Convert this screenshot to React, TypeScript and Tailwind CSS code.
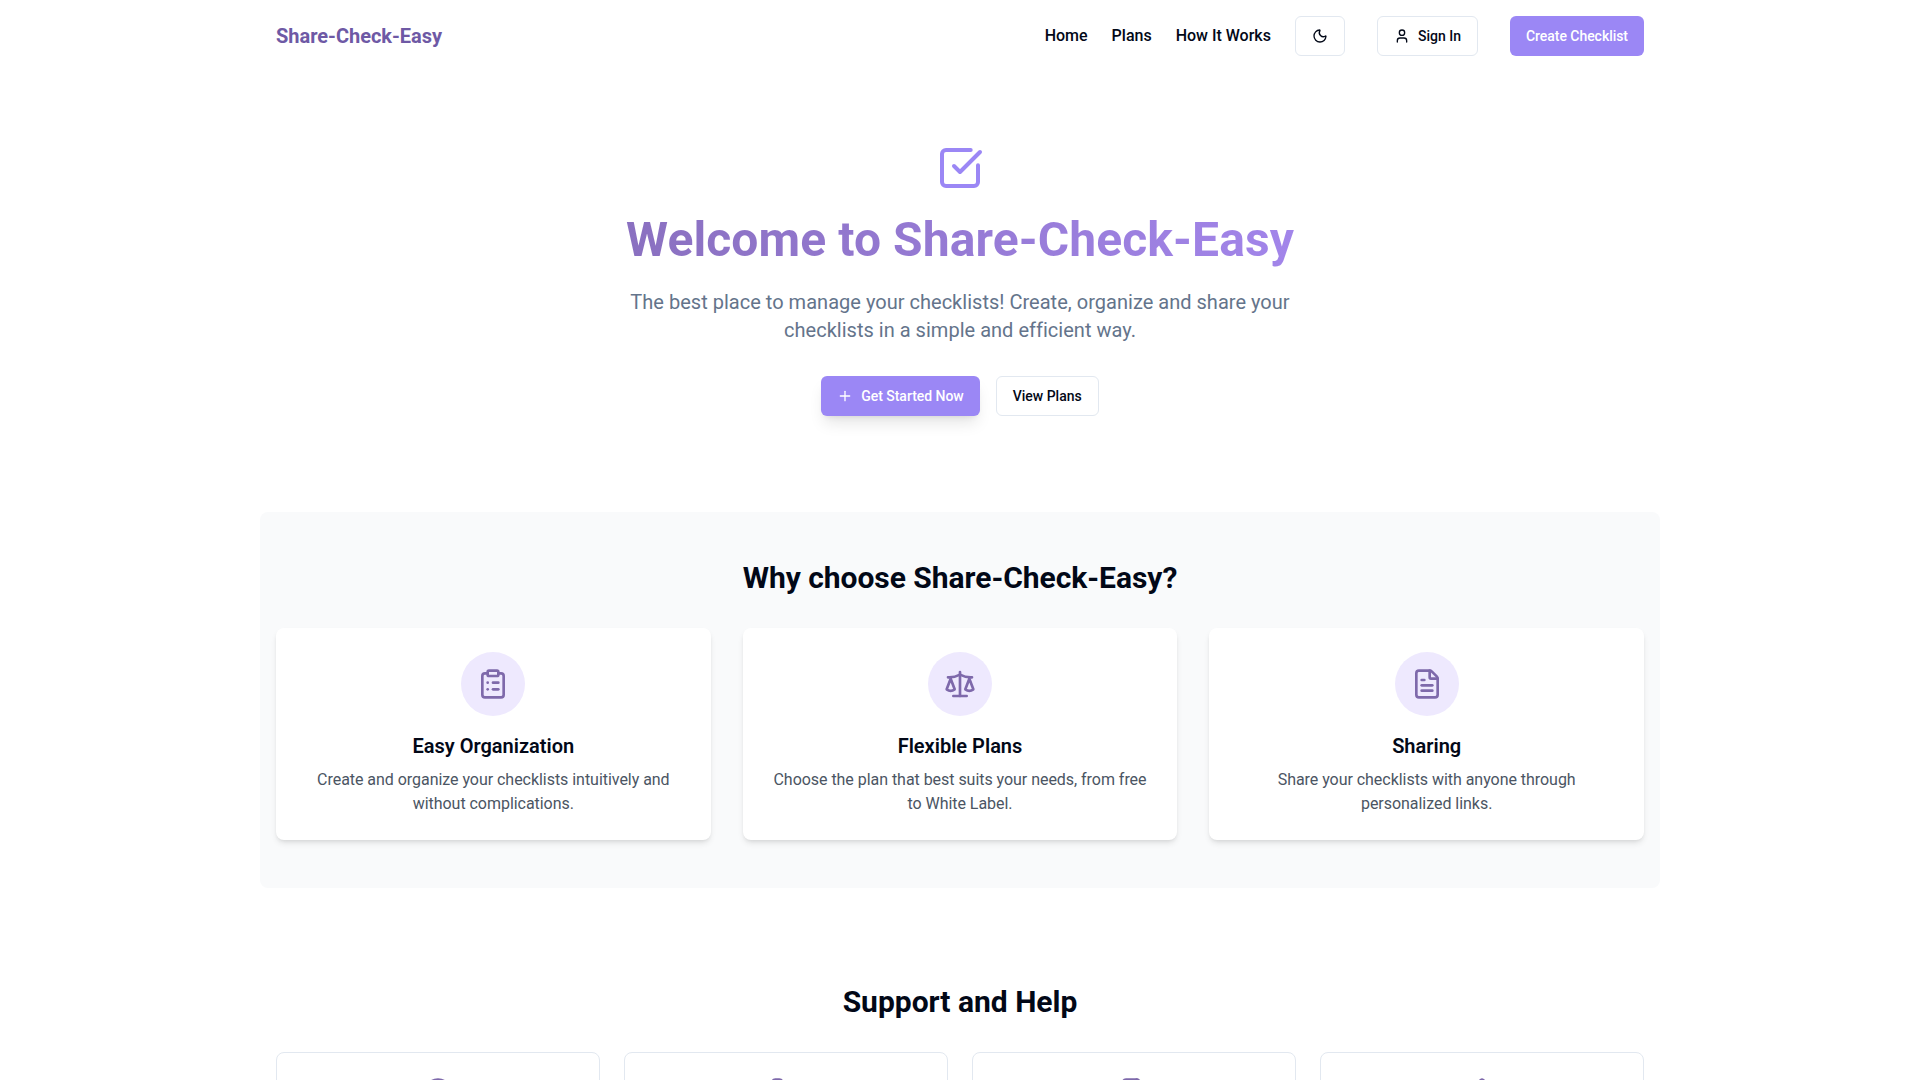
import React from 'react';
import { Moon, User, Plus, SquareCheckBig, ClipboardList, Scale, FileText, CircleHelp, Phone, Shield } from 'lucide-react';

const features = [
  {
    icon: ClipboardList,
    title: 'Easy Organization',
    text: 'Create and organize your checklists intuitively and without complications.',
  },
  {
    icon: Scale,
    title: 'Flexible Plans',
    text: 'Choose the plan that best suits your needs, from free to White Label.',
  },
  {
    icon: FileText,
    title: 'Sharing',
    text: 'Share your checklists with anyone through personalized links.',
  },
];

const support = [CircleHelp, Phone, FileText, Shield];

export default function App() {
  return (
    <div className="h-[1080px] overflow-hidden bg-white font-['Roboto',sans-serif] text-[#020817]">
      {/* Header */}
      <header className="mx-auto flex h-[72px] w-[1400px] items-center justify-between px-4">
        <span className="text-xl font-bold tracking-[-0.02px] text-[#6e59a5]">Share-Check-Easy</span>
        <nav className="flex items-center">
          <a className="mr-6 font-medium">Home</a>
          <a className="mr-6 font-medium">Plans</a>
          <a className="mr-6 font-medium">How It Works</a>
          <button className="mr-8 flex h-10 w-[50px] items-center justify-center rounded-md border border-[#e2e8f0] bg-white">
            <Moon className="h-4 w-4" />
          </button>
          <button className="mr-8 flex h-10 items-center gap-2 rounded-md border border-[#e2e8f0] bg-white px-4 text-sm font-medium">
            <User className="h-4 w-4" />
            Sign In
          </button>
          <button className="flex h-10 items-center rounded-md bg-[#9b87f5] px-4 text-sm font-medium tracking-[-0.04px] text-white">
            Create Checklist
          </button>
        </nav>
      </header>

      {/* Hero */}
      <section className="flex flex-col items-center pt-[72px] text-center">
        <SquareCheckBig className="h-12 w-12 text-[#9b87f5]" />
        <h1 className="mt-[18px] bg-gradient-to-r from-[#8a70c0] to-[#a285ea] bg-clip-text text-5xl font-bold leading-[60px] tracking-[0.09px] text-transparent">
          Welcome to Share-Check-Easy
        </h1>
        <p className="mt-[18px] max-w-[672px] text-xl tracking-[0.02px] text-[#64748b]">
          The best place to manage your checklists! Create, organize and share your checklists in a simple and efficient way.
        </p>
        <div className="mt-8 flex gap-4">
          <button className="flex h-10 items-center gap-2 rounded-md bg-[#9b87f5] px-4 text-sm font-medium tracking-[-0.04px] text-white shadow-lg">
            <Plus className="h-4 w-4" />
            Get Started Now
          </button>
          <button className="flex h-10 items-center rounded-md border border-[#e2e8f0] bg-white px-4 text-sm font-medium">
            View Plans
          </button>
        </div>
      </section>

      {/* Why choose */}
      <section className="mx-auto mt-24 w-[1400px] rounded-lg bg-[#f9fafb] px-4 py-12">
        <h2 className="mb-8 text-center text-3xl font-bold tracking-[-0.03px]">Why choose Share-Check-Easy?</h2>
        <div className="grid grid-cols-3 gap-8">
          {features.map((f) => (
            <div key={f.title} className="flex flex-col items-center rounded-lg bg-white p-6 text-center shadow-md">
              <div className="mb-4 flex h-16 w-16 items-center justify-center rounded-full bg-[#eee9fe] text-[#7e69ab]">
                <f.icon className="h-8 w-8" />
              </div>
              <h3 className="mb-2 text-xl font-semibold">{f.title}</h3>
              <p className="tracking-[-0.04px] text-[#4b5563]">{f.text}</p>
            </div>
          ))}
        </div>
      </section>

      {/* Support */}
      <section className="mx-auto mt-24 w-[1400px] px-4">
        <h2 className="mb-8 text-center text-3xl font-bold">Support and Help</h2>
        <div className="grid grid-cols-4 gap-6">
          {support.map((Icon, i) => (
            <div key={i} className="flex h-60 justify-center rounded-lg border border-[#e2e8f0] bg-white pt-6 text-[#7e69ab]">
              <Icon className="h-8 w-8" />
            </div>
          ))}
        </div>
      </section>
    </div>
  );
}
